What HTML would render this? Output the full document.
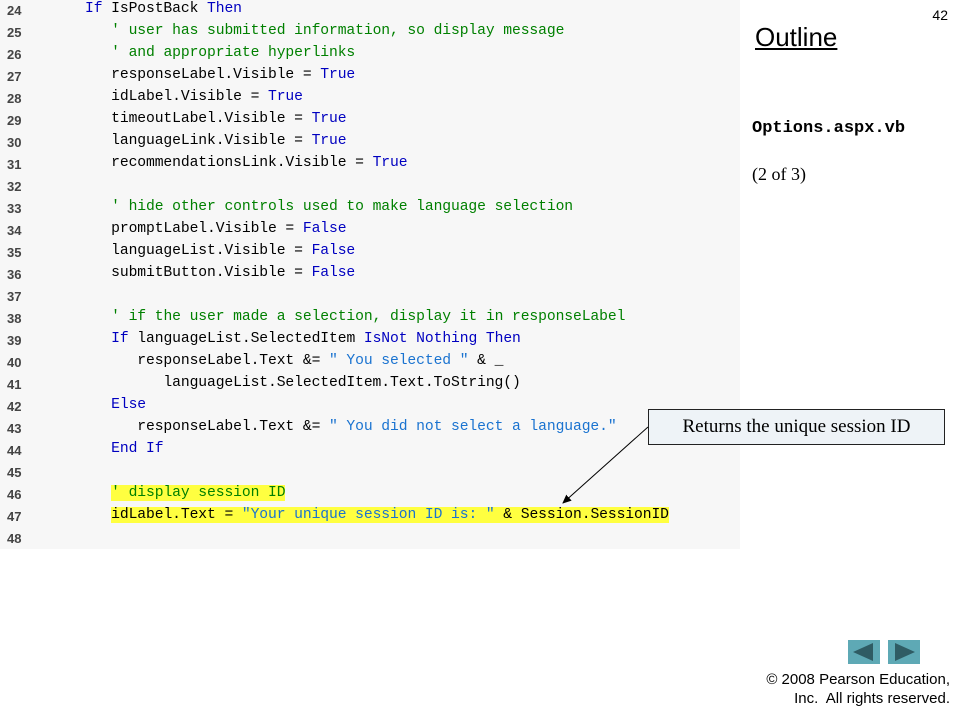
<!DOCTYPE html>
<html><head><meta charset="utf-8"><style>
body{margin:0;width:960px;height:720px;background:#fff;position:relative;overflow:hidden;font-family:"Liberation Sans",sans-serif}
#code{position:absolute;left:0;top:0;width:740px;height:549px;background:#f7f7f7}
.ln{position:absolute;left:7px;font:bold 13px "Liberation Sans",sans-serif;color:#444}
.cl{position:absolute;left:85px;font:14.7px "Liberation Mono",monospace;white-space:pre;color:#000}
.k{color:#0000c0}.c{color:#008000}.s{color:#1a73d0}
.hl{background:#ffff40}
</style></head><body>
<div id="code"></div>
<div style="position:absolute;right:12px;top:7px;font-size:14px">42</div>
<div style="position:absolute;left:755px;top:22px;font-size:26px;text-decoration:underline">Outline</div>
<div style="position:absolute;left:752px;top:119px;font:bold 17px 'Liberation Mono',monospace">Options.aspx.vb</div>
<div style="position:absolute;left:752px;top:164px;font:18px 'Liberation Serif',serif">(2 of 3)</div>
<div style="position:absolute;left:648px;top:409px;width:295px;height:34px;border:1px solid #222;background:#eef3f7;font:19px 'Liberation Serif',serif;text-align:center;line-height:34px">Returns the unique session ID</div>
<svg style="position:absolute;left:0;top:0" width="960" height="720">
<defs><marker id="a" markerWidth="10" markerHeight="10" refX="8" refY="5" orient="auto"><path d="M0,1 L9,5 L0,9z" fill="#000"/></marker></defs>
<line x1="648" y1="427" x2="563" y2="503" stroke="#000" stroke-width="1" marker-end="url(#a)"/>
<rect x="848" y="640" width="32" height="24" fill="#5ea9b5"/>
<rect x="888" y="640" width="32" height="24" fill="#5ea9b5"/>
<path d="M853,652 L873,643 L873,661z" fill="#2f5c64"/>
<path d="M915,652 L895,643 L895,661z" fill="#2f5c64"/>
</svg>
<div style="position:absolute;right:10px;top:670px;font-size:15px;text-align:right;line-height:19px">&copy; 2008 Pearson Education,<br>Inc.&nbsp; All rights reserved.</div>
<script>
var L=[
'<span class="k">If</span> IsPostBack <span class="k">Then</span>',
'   <span class="c">\' user has submitted information, so display message</span>',
'   <span class="c">\' and appropriate hyperlinks</span>',
'   responseLabel.Visible = <span class="k">True</span>',
'   idLabel.Visible = <span class="k">True</span>',
'   timeoutLabel.Visible = <span class="k">True</span>',
'   languageLink.Visible = <span class="k">True</span>',
'   recommendationsLink.Visible = <span class="k">True</span>',
'',
'   <span class="c">\' hide other controls used to make language selection</span>',
'   promptLabel.Visible = <span class="k">False</span>',
'   languageList.Visible = <span class="k">False</span>',
'   submitButton.Visible = <span class="k">False</span>',
'',
'   <span class="c">\' if the user made a selection, display it in responseLabel</span>',
'   <span class="k">If</span> languageList.SelectedItem <span class="k">IsNot</span> <span class="k">Nothing</span> <span class="k">Then</span>',
'      responseLabel.Text &amp;= <span class="s">" You selected "</span> &amp; _',
'         languageList.SelectedItem.Text.ToString()',
'   <span class="k">Else</span>',
'      responseLabel.Text &amp;= <span class="s">" You did not select a language."</span>',
'   <span class="k">End</span> <span class="k">If</span>',
'',
'   <span class="hl"><span class="c">\' display session ID</span></span>',
'   <span class="hl">idLabel.Text = <span class="s">"Your unique session ID is: "</span> &amp; Session.SessionID</span>',
''];
var h='';
for(var i=0;i<L.length;i++){var y=i*22;
h+='<div class="ln" style="top:'+(y+3)+'px">'+(24+i)+'</div><div class="cl" style="top:'+(y+1)+'px;letter-spacing:-0.1px">'+L[i]+'</div>';}
document.getElementById('code').innerHTML=h;
</script>
</body></html>
